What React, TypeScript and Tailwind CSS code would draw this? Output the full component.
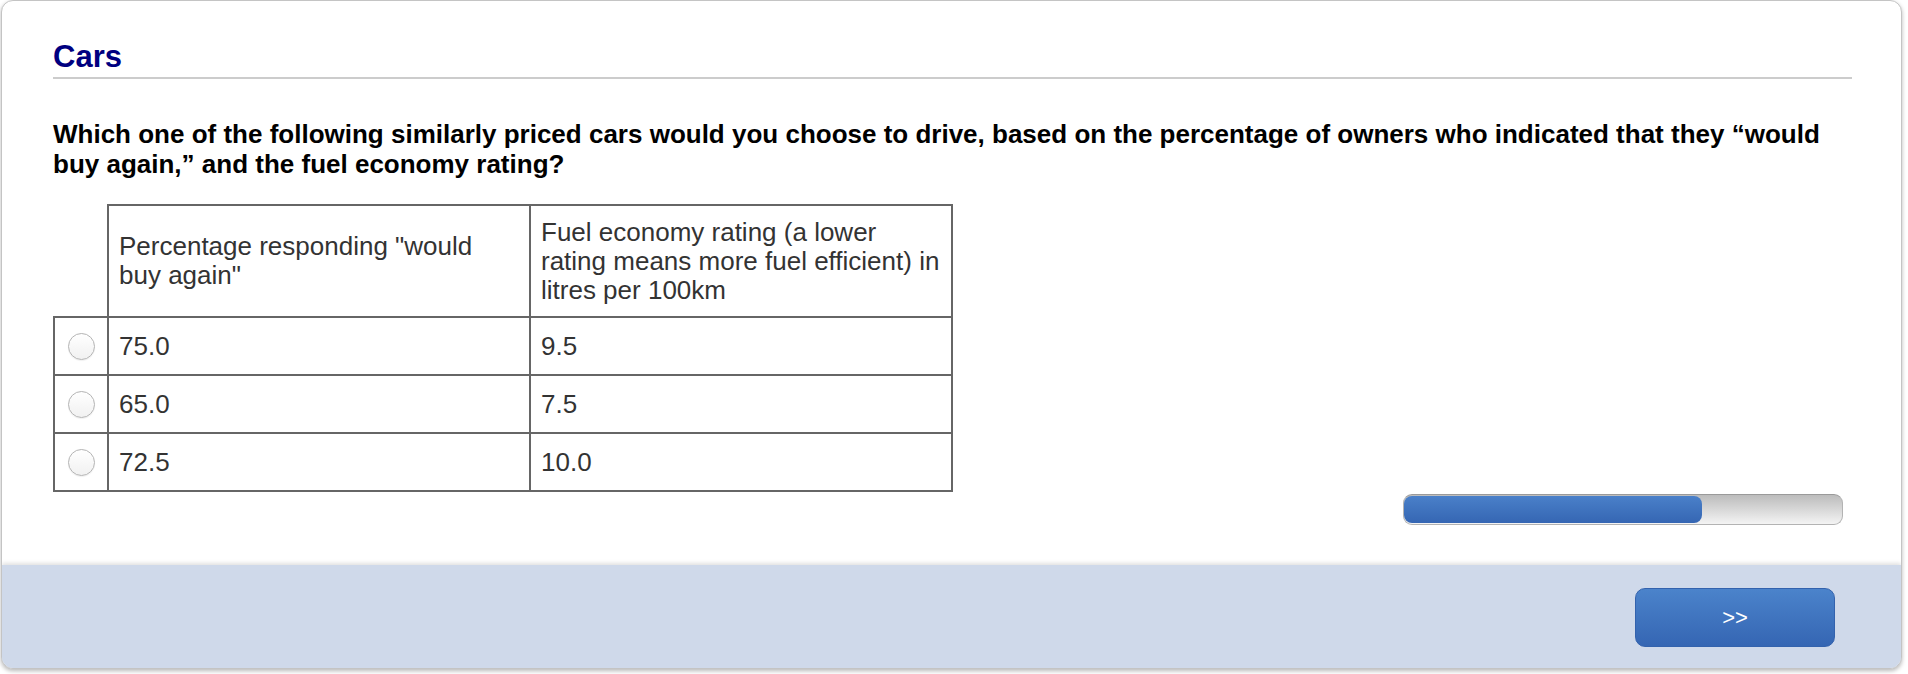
import React from "react";

const rows = [
  { a: "75.0", b: "9.5" },
  { a: "65.0", b: "7.5" },
  { a: "72.5", b: "10.0" },
];

function Radio() {
  return (
    <div className="mx-auto w-[27px] h-[27px] rounded-full border border-[#b4b4b4] bg-linear-to-b from-white to-[#f1f1f1] shadow-[0_1px_1px_rgba(0,0,0,0.06)]" />
  );
}

export default function App() {
  return (
    <div
      className="min-h-screen bg-white pl-[1px]"
      style={{ fontFamily: '"Liberation Sans", Arial, Helvetica, sans-serif' }}
    >
      <div className="w-[1901px] rounded-[12px] border border-[#c4c4c4] bg-white overflow-hidden shadow-[0_2px_4px_rgba(0,0,0,0.28)]">
        <div className="h-[564px] pl-[51px] pr-[49px] pt-[38px]">
          <h1 className="text-[31px] leading-[36px] font-bold text-[#000080]">Cars</h1>
          <div className="mt-[2px] h-[2px] bg-[#cccccc]" />
          <p className="mt-[40px] text-[26px] leading-[30px] font-bold text-black">
            Which one of the following similarly priced cars would you choose to drive, based on the percentage of owners who indicated that they “would
            <br />
            buy again,” and the fuel economy rating?
          </p>
          <table className="mt-[25px] border-collapse table-fixed w-[898px] text-[26px] leading-[30px] text-[#333333]">
            <colgroup>
              <col className="w-[54px]" />
              <col className="w-[422px]" />
              <col className="w-[422px]" />
            </colgroup>
            <thead>
              <tr className="h-[112px]">
                <th className="p-0" />
                <th className="border-2 border-[#666666] font-normal text-left align-middle pl-[10px] pr-0 leading-[29px] whitespace-nowrap">
                  Percentage responding "would
                  <br />
                  buy again"
                </th>
                <th className="border-2 border-[#666666] font-normal text-left align-middle pl-[10px] pr-0 leading-[29px] whitespace-nowrap">
                  Fuel economy rating (a lower
                  <br />
                  rating means more fuel efficient) in
                  <br />
                  litres per 100km
                </th>
              </tr>
            </thead>
            <tbody>
              {rows.map((r) => (
                <tr key={r.a} className="h-[58px]">
                  <td className="border-2 border-[#666666] p-0 align-middle">
                    <Radio />
                  </td>
                  <td className="border-2 border-[#666666] pl-[10px] align-middle">{r.a}</td>
                  <td className="border-2 border-[#666666] pl-[10px] align-middle">{r.b}</td>
                </tr>
              ))}
            </tbody>
          </table>
          <div className="flex justify-end mt-[2px] pr-[9px]">
            <div className="relative w-[440px] h-[31px] rounded-[9px] border border-[#b3b3b3] border-t-[#9a9a9a] bg-linear-to-b from-[#bcbcbc] to-[#f4f4f4]">
              <div className="absolute left-0 top-[1px] bottom-[1px] w-[298px] rounded-[8px] bg-linear-to-b from-[#4a80c9] to-[#3566b3]" />
            </div>
          </div>
        </div>
        <div className="h-[103px] bg-[#cfd9ea] flex justify-end items-start pt-[23px] pr-[66px] shadow-[0_-2px_4px_rgba(0,0,0,0.12)] relative">
          <button className="w-[200px] h-[59px] rounded-[10px] border border-[#3362ad] bg-linear-to-b from-[#4b83cb] to-[#3566b3] text-white text-[22px] leading-none flex items-center justify-center">
            &gt;&gt;
          </button>
        </div>
      </div>
    </div>
  );
}
